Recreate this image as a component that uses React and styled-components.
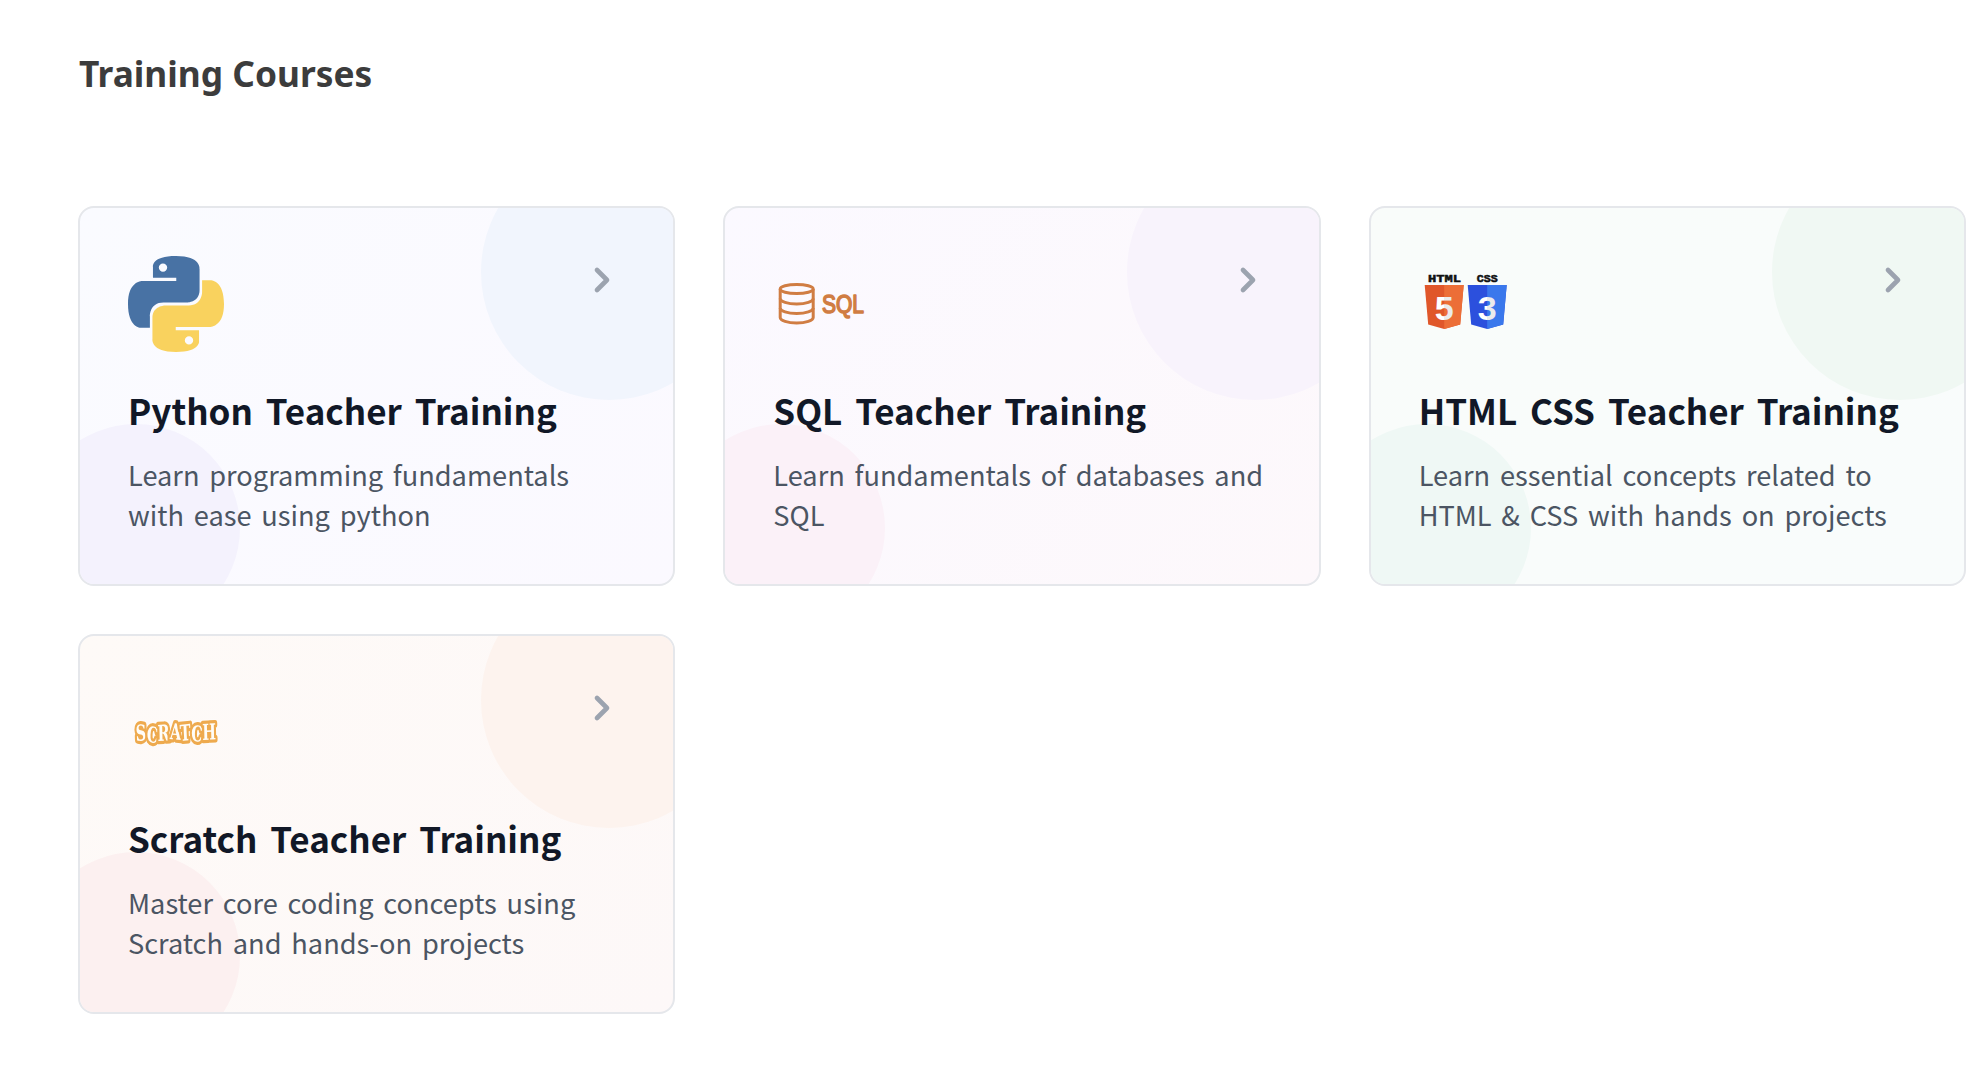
import React from 'react'
import styled, { createGlobalStyle } from 'styled-components'
import { ChevronRight } from 'lucide-react'

const GlobalStyle = createGlobalStyle`
  html, body {
    margin: 0;
    padding: 0;
    background: #ffffff;
  }
  * {
    box-sizing: border-box;
  }
`

const themes = {
  blue: { bg: 'linear-gradient(135deg, #fafbff, #fbf9ff)', top: '#f1f5fd', bottom: '#f4f2fd' },
  purple: { bg: 'linear-gradient(135deg, #fbf9ff, #fdf8fb)', top: '#f8f3fc', bottom: '#fbf1f8' },
  green: { bg: 'linear-gradient(135deg, #f9fcfa, #f9fcfc)', top: '#f0f8f3', bottom: '#eff8f5' },
  orange: { bg: 'linear-gradient(135deg, #fefaf7, #fdf8f8)', top: '#fdf3ee', bottom: '#fcf0f0' },
}

function PythonLogo() {
  const snake = 'M54.9 0c-28 0-26.3 12.2-26.3 12.2l0 12.6h26.7v3.8H18S0 26.5 0 54.9s15.7 27.4 15.7 27.4h9.4V69.1s-.5-15.7 15.4-15.7h26.6s14.9.2 14.9-14.4V14.9S84.3 0 54.9 0zM40.1 8.5a4.8 4.8 0 1 1 0 9.6 4.8 4.8 0 0 1 0-9.6z'
  return (
    <svg width="96" height="96" viewBox="0 0 110 110">
      <path d={snake} fill="#4872a4" />
      <path d={snake} fill="#f9d25e" transform="rotate(180 55 55)" />
    </svg>
  )
}

function SqlLogo() {
  return (
    <svg width="96" height="96" viewBox="0 0 96 96" fill="none">
      <g stroke="#d07d43" strokeWidth="3">
        <ellipse cx="23.700" cy="33" rx="16.500" ry="4.500" />
        <path d="M7.200 33v28.500c0 3 7.400 5.500 16.500 5.500s16.500-2.500 16.500-5.500V33" />
        <path d="M7.200 42.500c0 3 7.400 5.500 16.500 5.500s16.500-2.500 16.500-5.500" />
        <path d="M7.200 52c0 3 7.400 5.500 16.500 5.500S40.200 55 40.200 52" />
      </g>
      <SqlText x="49" y="57" fontSize="25" textLength="42" lengthAdjust="spacingAndGlyphs">SQL</SqlText>
    </svg>
  )
}

function HtmlCssLogo() {
  return (
    <svg width="96" height="96" viewBox="0 0 96 96" fill="none">
      <defs>
        <linearGradient id="htmlDigit" x1="0" x2="1" y1="0" y2="0">
          <stop offset="0.500" stopColor="#ffffff" />
          <stop offset="0.500" stopColor="#ebebeb" />
        </linearGradient>
      </defs>
      <BadgeText x="9" y="26" fontSize="11" textLength="33" lengthAdjust="spacingAndGlyphs">HTML</BadgeText>
      <BadgeText x="57.700" y="26" fontSize="11" textLength="21" lengthAdjust="spacingAndGlyphs">CSS</BadgeText>
      <path d="M5.700 29h39l-3.500 39.500L25.200 73 9.200 68.500z" fill="#e0572a" />
      <path d="M25.200 29h19.500l-3.500 39.500L25.200 73z" fill="#ec6e37" />
      <LogoText x="25.200" y="64" fontSize="34" fill="url(#htmlDigit)" textAnchor="middle">5</LogoText>
      <path d="M48.700 29h39l-3.500 39.500L68.200 73l-16-4.500z" fill="#2c50dd" />
      <path d="M68.200 29h19.500l-3.500 39.500L68.200 73z" fill="#3a78ec" />
      <LogoText x="68.200" y="64" fontSize="34" fill="url(#htmlDigit)" textAnchor="middle">3</LogoText>
    </svg>
  )
}

function ScratchLogo() {
  return (
    <svg width="96" height="96" viewBox="0 0 96 96" fill="none">
      <ScratchText
        x="8"
        y="57"
        fontSize="22"
        textLength="80"
        lengthAdjust="spacingAndGlyphs"
        rotate="-3 4 -2 3 -4 3 -2"
        dy="0 1 -1 -2 2 0 -1"
      >
        SCRATCH
      </ScratchText>
    </svg>
  )
}

const courses = [
  { title: 'Python Teacher Training', text: 'Learn programming fundamentals with ease using python', tone: 'blue', Logo: PythonLogo },
  { title: 'SQL Teacher Training', text: 'Learn fundamentals of databases and SQL', tone: 'purple', Logo: SqlLogo },
  { title: 'HTML CSS Teacher Training', text: 'Learn essential concepts related to HTML & CSS with hands on projects', tone: 'green', Logo: HtmlCssLogo },
  { title: 'Scratch Teacher Training', text: 'Master core coding concepts using Scratch and hands-on projects', tone: 'orange', Logo: ScratchLogo },
]

function App() {
  return (
    <Page>
      <GlobalStyle />
      <Heading>Training Courses</Heading>
      <CourseGrid>
        {courses.map(({ title, text, tone, Logo }) => (
          <Card key={title} $tone={tone}>
            <TopCircle $tone={tone} />
            <BottomCircle $tone={tone} />
            <CardBody>
              <CardHead>
                <Logo />
                <Arrow><ChevronRight size={40} strokeWidth={2.8} /></Arrow>
              </CardHead>
              <CardTitle>{title}</CardTitle>
              <CardText>{text}</CardText>
            </CardBody>
          </Card>
        ))}
      </CourseGrid>
    </Page>
  )
}

const Page = styled.main`
  padding: 48px 14px 0 78px;
  min-height: 1090px;
  font-family: "Noto Sans", sans-serif;
`
const Heading = styled.h1`
  margin: 0 0 108px;
  padding-left: 1px;
  font-size: 35.300px;
  line-height: 50px;
  font-weight: 700;
  color: #3c3c3c;
`
const CourseGrid = styled.div`
  display: grid;
  grid-template-columns: repeat(3, 1fr);
  gap: 48px;
`
const Card = styled.article`
  position: relative;
  overflow: hidden;
  height: 380px;
  border: 2px solid #e5e7eb;
  border-radius: 16px;
  background: ${p => themes[p.$tone].bg};
`
const TopCircle = styled.div`
  position: absolute;
  top: -64px;
  right: -64px;
  width: 256px;
  height: 256px;
  border-radius: 50%;
  background: ${p => themes[p.$tone].top};
`
const BottomCircle = styled.div`
  position: absolute;
  left: -48px;
  bottom: -48px;
  width: 208px;
  height: 208px;
  border-radius: 50%;
  background: ${p => themes[p.$tone].bottom};
`
const CardBody = styled.div`
  position: relative;
  padding: 48px;
`
const CardHead = styled.div`
  display: flex;
  justify-content: space-between;
  align-items: flex-start;
  height: 96px;
  margin-bottom: 38px;
`
const Arrow = styled.span`
  display: flex;
  margin-top: 4px;
  margin-right: 3px;
  color: #9ca3af;
`
const CardTitle = styled.h3`
  margin: 0 0 24px;
  font-family: "Noto Sans CJK JP", "Noto Sans", sans-serif;
  font-size: 35px;
  line-height: 40px;
  font-weight: 700;
  word-spacing: 5px;
  color: #111827;
  white-space: nowrap;
`
const CardText = styled.p`
  margin: 0;
  font-family: "Noto Sans CJK JP", "Noto Sans", sans-serif;
  font-size: 27.200px;
  line-height: 40px;
  word-spacing: 3.700px;
  color: #4b5563;
`
const LogoText = styled.text`
  font-family: "Liberation Sans", sans-serif;
  font-weight: 700;
`
const SqlText = styled.text`
  font-family: "Liberation Sans", sans-serif;
  font-weight: 400;
  fill: #d07d43;
  stroke: #d07d43;
  stroke-width: 1.600;
  stroke-linejoin: round;
`
const BadgeText = styled.text`
  font-family: "Liberation Mono", monospace;
  font-weight: 700;
  fill: #111111;
  stroke: #111111;
  stroke-width: 0.500;
`
const ScratchText = styled.text`
  font-family: "DejaVu Serif", serif;
  font-weight: 700;
  fill: #fffdf8;
  stroke: #eeaa4e;
  stroke-width: 6.500;
  stroke-linejoin: round;
  paint-order: stroke;
  filter: drop-shadow(0 0 1px #ffffff);
`

export default App
